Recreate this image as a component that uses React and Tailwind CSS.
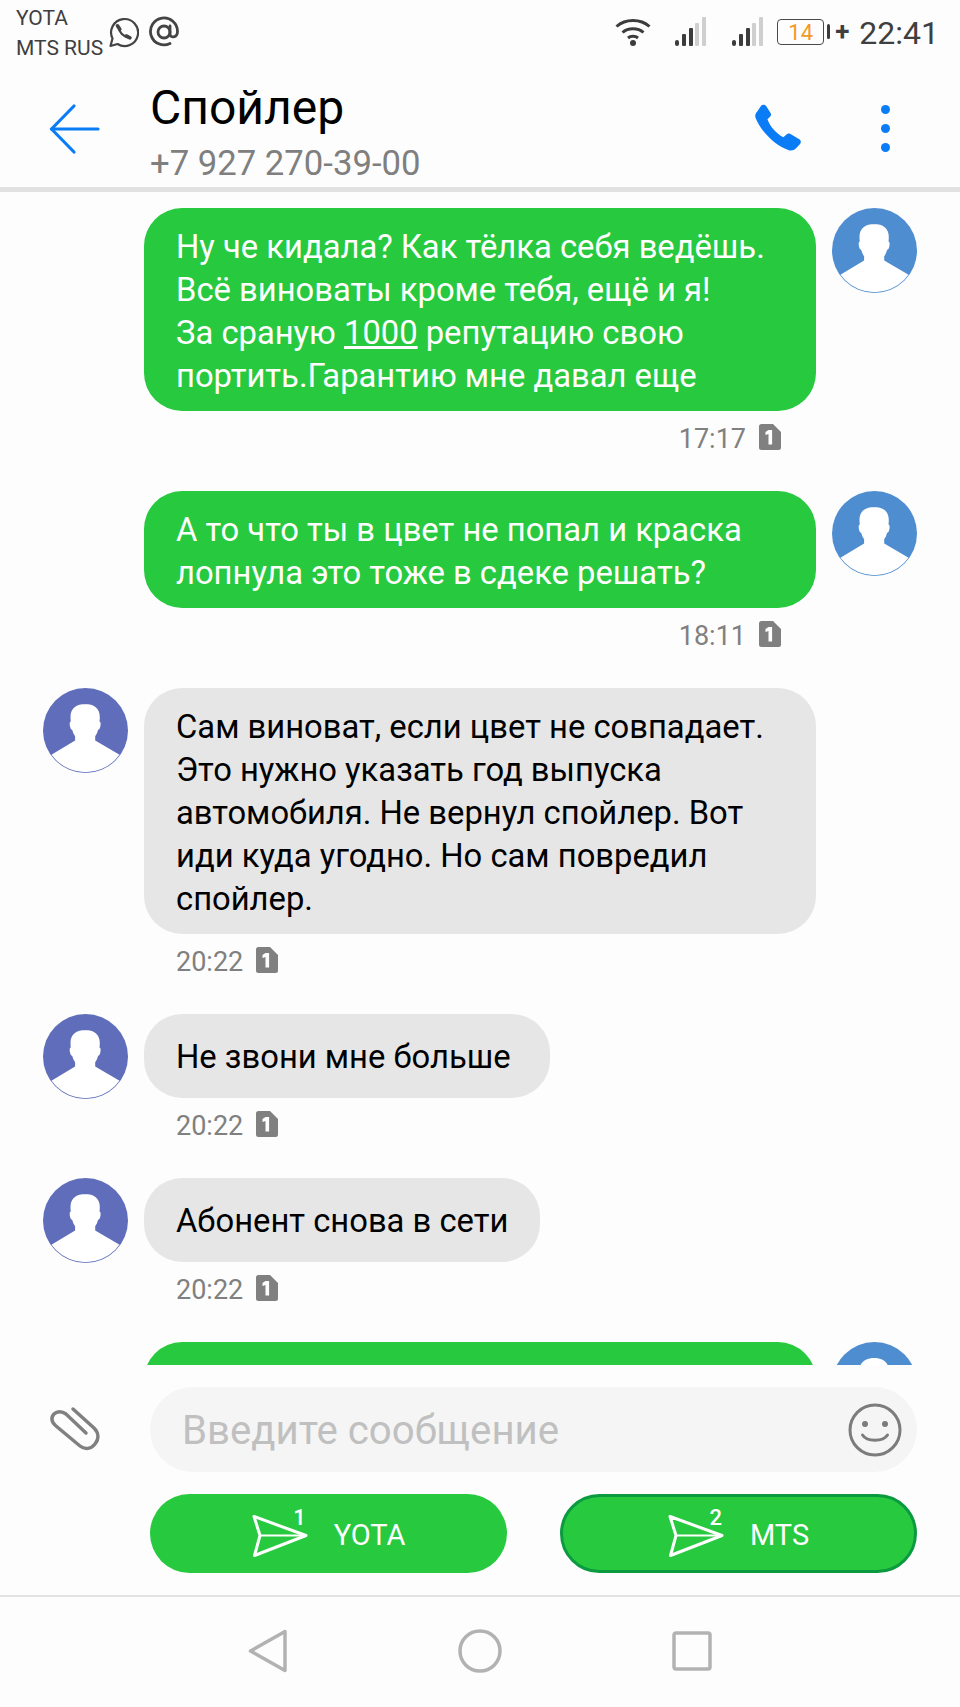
const ACCENT = "#0a7cf5";

const WhatsappIcon = () => (
  <svg width="32" height="32" viewBox="0 0 32 32" fill="none" stroke="#444" strokeWidth="2.200" strokeLinejoin="round">
    <path d="M3.500 30l2-7.500A13.500 13.500 0 1 1 10.500 28z" />
    <path d="M11.500 11C12 16 16 20.500 21.500 21.500" strokeWidth="2.200" strokeLinecap="round" />
    <path d="M10.500 9.800l2.300 3.500" strokeWidth="3.600" strokeLinecap="round" />
    <path d="M19.200 20l3.800 1.800" strokeWidth="3.600" strokeLinecap="round" />
  </svg>
);

const AtIcon = () => (
  <svg width="32" height="32" viewBox="0 0 32 32" fill="none" stroke="#444" strokeWidth="2.800" strokeLinecap="round">
    <circle cx="16" cy="16" r="6" />
    <path d="M22 10v8c0 4.500 7.500 4 7.500-2.500A13.500 13.500 0 1 0 22 27.500" />
  </svg>
);

const WifiIcon = () => (
  <svg width="36" height="30" viewBox="0 0 36 30" fill="none" stroke="#3c3c3c" strokeWidth="3">
    <path d="M1.500 9.500C10.500 1.500 25.500 1.500 34.500 9.500" />
    <path d="M7.500 15.500C13 10.500 23 10.500 28.500 15.500" />
    <path d="M13 21C15.500 18.800 20.500 18.800 23 21" />
    <circle cx="18" cy="26" r="3" fill="#3c3c3c" stroke="none" />
  </svg>
);

const SignalIcon = () => (
  <svg width="31" height="30" viewBox="0 0 31 30">
    <rect x="0" y="23" width="4" height="6" rx="2" fill="#3c3c3c" />
    <rect x="7" y="17" width="4" height="12" rx="1" fill="#3c3c3c" />
    <rect x="14" y="11" width="4" height="18" rx="1" fill="#3c3c3c" />
    <rect x="20" y="6" width="4" height="23" rx="1" fill="#cfcfcf" />
    <rect x="27" y="0" width="4" height="29" rx="1" fill="#cfcfcf" />
  </svg>
);

const StatusBar = () => (
  <div className="h-[65px] shrink-0 relative flex items-start text-[#3f3f3f]">
    <div className="ml-[16px] mt-[3px] text-[21px] leading-[30px]">
      <div>YOTA</div>
      <div>MTS RUS</div>
    </div>
    <div className="mt-[16px] ml-[4px]"><WhatsappIcon /></div>
    <div className="mt-[16px] ml-[9px]"><AtIcon /></div>
    <div className="ml-auto mt-[17px] flex items-start">
      <div className="mr-[24px]"><WifiIcon /></div>
      <div className="mr-[26px]"><SignalIcon /></div>
      <div className="mr-[14px]"><SignalIcon /></div>
      <div className="w-[47px] h-[26px] mt-[2px] border border-[#4a4a4a] rounded-[4px] flex items-center justify-center text-[22px] text-[#f29a26]">14</div>
      <div className="w-[3px] h-[15px] mt-[7px] ml-[3px] bg-[#3c3c3c] rounded-sm" />
      <div className="ml-[5px] text-[26px] leading-[28px] font-bold">+</div>
      <div className="ml-[10px] mr-[21px] mt-[1px] text-[32px] leading-[30px]">22:41</div>
    </div>
  </div>
);

const Header = () => (
  <div className="h-[127px] shrink-0 flex items-start border-b-[5px] border-[#e2e2e2]">
    <svg className="ml-[49px] mt-[38px]" width="52" height="52" viewBox="0 0 52 52" fill="none" stroke={ACCENT} strokeWidth="3.200" strokeLinecap="round" strokeLinejoin="round">
      <path d="M2.500 26H49" />
      <path d="M25 3L2.500 26 25 49" />
    </svg>
    <div className="ml-[49px]">
      <div className="text-[48px] leading-[56px] mt-[15px] text-black">Спойлер</div>
      <div className="text-[34.700px] leading-[42px] mt-[6px] text-[#7f7f7f]">+7 927 270-39-00</div>
    </div>
    <svg className="ml-auto mt-[38px]" width="52" height="52" viewBox="0 0 50 50" fill={ACCENT}>
      <path d="M8 2.500c1.500-1.300 3.500-1 4.600.5l4.300 6.500c.7 1.100.6 2.500-.3 3.400l-2.700 2.800c2.600 7.200 8.200 13.600 15.300 17.300l3.300-3c1-.9 2.400-1 3.500-.3l8.500 5.200c1.700 1 2 3.100.7 4.500l-3.800 4.100c-1.700 1.800-4.300 2.600-6.800 1.900C21.500 41.500 7.600 27.200 2.500 14.500c-.8-2.300-.1-4.700 1.600-6.400z" />
    </svg>
    <div className="ml-[76px] mr-[70px] mt-[40px] flex flex-col gap-[10px]">
      <div className="w-[9px] h-[9px] rounded-full bg-[#0a7cf5]" />
      <div className="w-[9px] h-[9px] rounded-full bg-[#0a7cf5]" />
      <div className="w-[9px] h-[9px] rounded-full bg-[#0a7cf5]" />
    </div>
  </div>
);

const Avatar = ({ color }) => (
  <svg className="shrink-0" width="85" height="85" viewBox="0 0 85 85">
    <circle cx="42.500" cy="42.500" r="42.500" fill={color} />
    <clipPath id={"c" + color.slice(1)}>
      <circle cx="42.500" cy="42.500" r="41.700" />
    </clipPath>
    <path
      clipPath={"url(#c" + color.slice(1) + ")"}
      d="M42.500 16c-9 0-15 4-15 13 0 1.500.1 3 .3 4.500-1.300.4-1.300 2.500-.8 5 .4 2 1.200 3.200 2.300 3.500.6 2.500 1.500 4.500 2.800 6.200v4.300L8 67c6 12 20 19 34.500 19S71 79 77 67l-24.800-14.500v-4.300c1.300-1.700 2.200-3.700 2.800-6.200 1.100-.3 1.900-1.500 2.300-3.500.5-2.500.5-4.600-.8-5 .2-1.500.3-3 .3-4.500 0-9-6-13-14.800-13z"
      fill="#fff"
    />
  </svg>
);

const SimIcon = () => (
  <svg width="22" height="26" viewBox="0 0 22 26">
    <path d="M2.500 0H14l8 8v15.500a2.500 2.500 0 0 1-2.500 2.500h-17A2.500 2.500 0 0 1 0 23.500v-21A2.500 2.500 0 0 1 2.500 0z" fill="#808080" />
    <path d="M9.500 6h3.600v14.500H9.500V10l-3 1V8z" fill="#fff" />
  </svg>
);

const Time = ({ value, className }) => (
  <div className={"h-[53px] pt-[13px] flex items-start text-[#808080] text-[27px] leading-[30px] " + className}>
    <span>{value}</span>
    <span className="ml-[13px]"><SimIcon /></span>
  </div>
);

const Sent = ({ time, children }) => (
  <div className="flex pl-[144px] shrink-0">
    <div>
      <div className="w-[672px] rounded-[38px] bg-[#27c93f] text-white text-[32.750px] leading-[43px] pl-[32px] pt-[17.500px] pb-[13.500px]">
        {children}
      </div>
      {time && <Time value={time} className="justify-end pr-[35px]" />}
    </div>
    <div className="ml-[16px]"><Avatar color="#4f8dd1" /></div>
  </div>
);

const Received = ({ time, bubble, children }) => (
  <div className="flex pl-[43px] shrink-0">
    <Avatar color="#5f6dbb" />
    <div className="ml-[16px]">
      <div className={"rounded-[38px] bg-[#e6e6e6] text-black text-[32.750px] leading-[43px] pl-[32px] " + bubble}>
        {children}
      </div>
      <Time value={time} className="pl-[32px]" />
    </div>
  </div>
);

const SendIcon = () => (
  <svg width="56" height="44" viewBox="0 0 56 44" fill="none" stroke="#fff" strokeWidth="3" strokeLinejoin="round" strokeLinecap="round">
    <path d="M2 2.500L54 21.500 2.500 41.500 8 21.500z" />
    <path d="M8 21.500H54" strokeWidth="2.200" />
  </svg>
);

const SendButton = ({ num, label, selected }) => (
  <div className={"w-[357px] h-[79px] rounded-full bg-[#27c93f] flex items-center justify-center text-white " + (selected ? "border-[3px] border-[#0b9a40]" : "")}>
    <div className="relative mr-[26px] mt-[4px]">
      <SendIcon />
      <span className="absolute right-[2px] top-[-9px] text-[22px] leading-[26px] font-medium">{num}</span>
    </div>
    <span className="text-[29px] leading-[34px] mt-[2px]">{label}</span>
  </div>
);

export default function App() {
  return (
    <div className="w-[960px] h-[1707px] bg-[#fdfdfd] flex flex-col overflow-hidden font-['Roboto',sans-serif]">
      <StatusBar />
      <Header />

      {/* messages */}
      <div className="h-[1173px] pt-[16px] overflow-hidden flex flex-col shrink-0">
        <Sent time="17:17">
          Ну че кидала? Как тёлка себя ведёшь.<br />
          Всё виноваты кроме тебя, ещё и я!<br />
          За сраную <span className="underline">1000</span> репутацию свою<br />
          портить.Гарантию мне давал еще
        </Sent>
        <div className="h-[27px] shrink-0" />
        <Sent time="18:11">
          А то что ты в цвет не попал и краска<br />
          лопнула это тоже в сдеке решать?
        </Sent>
        <div className="h-[27px] shrink-0" />
        <Received time="20:22" bubble="w-[672px] pt-[17.500px] pb-[13.500px]">
          Сам виноват, если цвет не совпадает.<br />
          Это нужно указать год выпуска<br />
          автомобиля. Не вернул спойлер. Вот<br />
          иди куда угодно. Но сам повредил<br />
          спойлер.
        </Received>
        <div className="h-[27px] shrink-0" />
        <Received time="20:22" bubble="w-fit pr-[39px] pt-[22px] pb-[19px]">Не звони мне больше</Received>
        <div className="h-[27px] shrink-0" />
        <Received time="20:22" bubble="w-fit pr-[32px] pt-[22px] pb-[19px]">Абонент снова в сети</Received>
        <div className="h-[27px] shrink-0" />
        <Sent>&nbsp;<br />&nbsp;</Sent>
      </div>

      {/* input */}
      <div className="flex items-center pt-[22px]">
        <svg className="ml-[40px] mr-[40px]" width="70" height="60" viewBox="0 0 70 60" fill="none" stroke="#808080" strokeWidth="3.500" strokeLinecap="round">
          <path d="M33 9L54 28C59 33 59 39 55 44 51 49 45 50 40 46L16 26C11 22 11 17 14 14 17 11 22 11 26 14L46 33" />
        </svg>
        <div className="w-[767px] h-[85px] rounded-full bg-[#f5f5f5] flex items-center pl-[32px]">
          <span className="text-[40.200px] text-[#c0c0c0] pt-[3px]">Введите сообщение</span>
          <svg className="ml-auto mr-[15px]" width="54" height="54" viewBox="0 0 54 54" fill="none" stroke="#7c7c7c" strokeWidth="3">
            <circle cx="27" cy="27" r="25" />
            <circle cx="17" cy="21" r="3" fill="#7c7c7c" stroke="none" />
            <circle cx="37" cy="21" r="3" fill="#7c7c7c" stroke="none" />
            <path d="M14.500 32C19 39 35 39 39.500 32" strokeLinecap="round" />
          </svg>
        </div>
      </div>

      {/* send buttons */}
      <div className="flex gap-[53px] pl-[150px] pt-[22px]">
        <SendButton num="1" label="YOTA" />
        <SendButton num="2" label="MTS" selected />
      </div>

      {/* nav bar */}
      <div className="mt-[22px] border-t-[2px] border-[#e2e2e2] flex-1 flex items-center justify-center gap-[170px] pb-[2px] pr-[1px]">
        <svg width="40" height="44" viewBox="0 0 40 44" fill="none" stroke="#b2b2b2" strokeWidth="3.500" strokeLinejoin="round">
          <path d="M37 2.500V41.500L2.500 22z" />
        </svg>
        <svg width="44" height="44" viewBox="0 0 44 44" fill="none" stroke="#b2b2b2" strokeWidth="3.500">
          <circle cx="22" cy="22" r="20" />
        </svg>
        <svg width="40" height="40" viewBox="0 0 40 40" fill="none" stroke="#b2b2b2" strokeWidth="3.500">
          <rect x="2" y="2" width="36" height="36" rx="2" />
        </svg>
      </div>
    </div>
  );
}
